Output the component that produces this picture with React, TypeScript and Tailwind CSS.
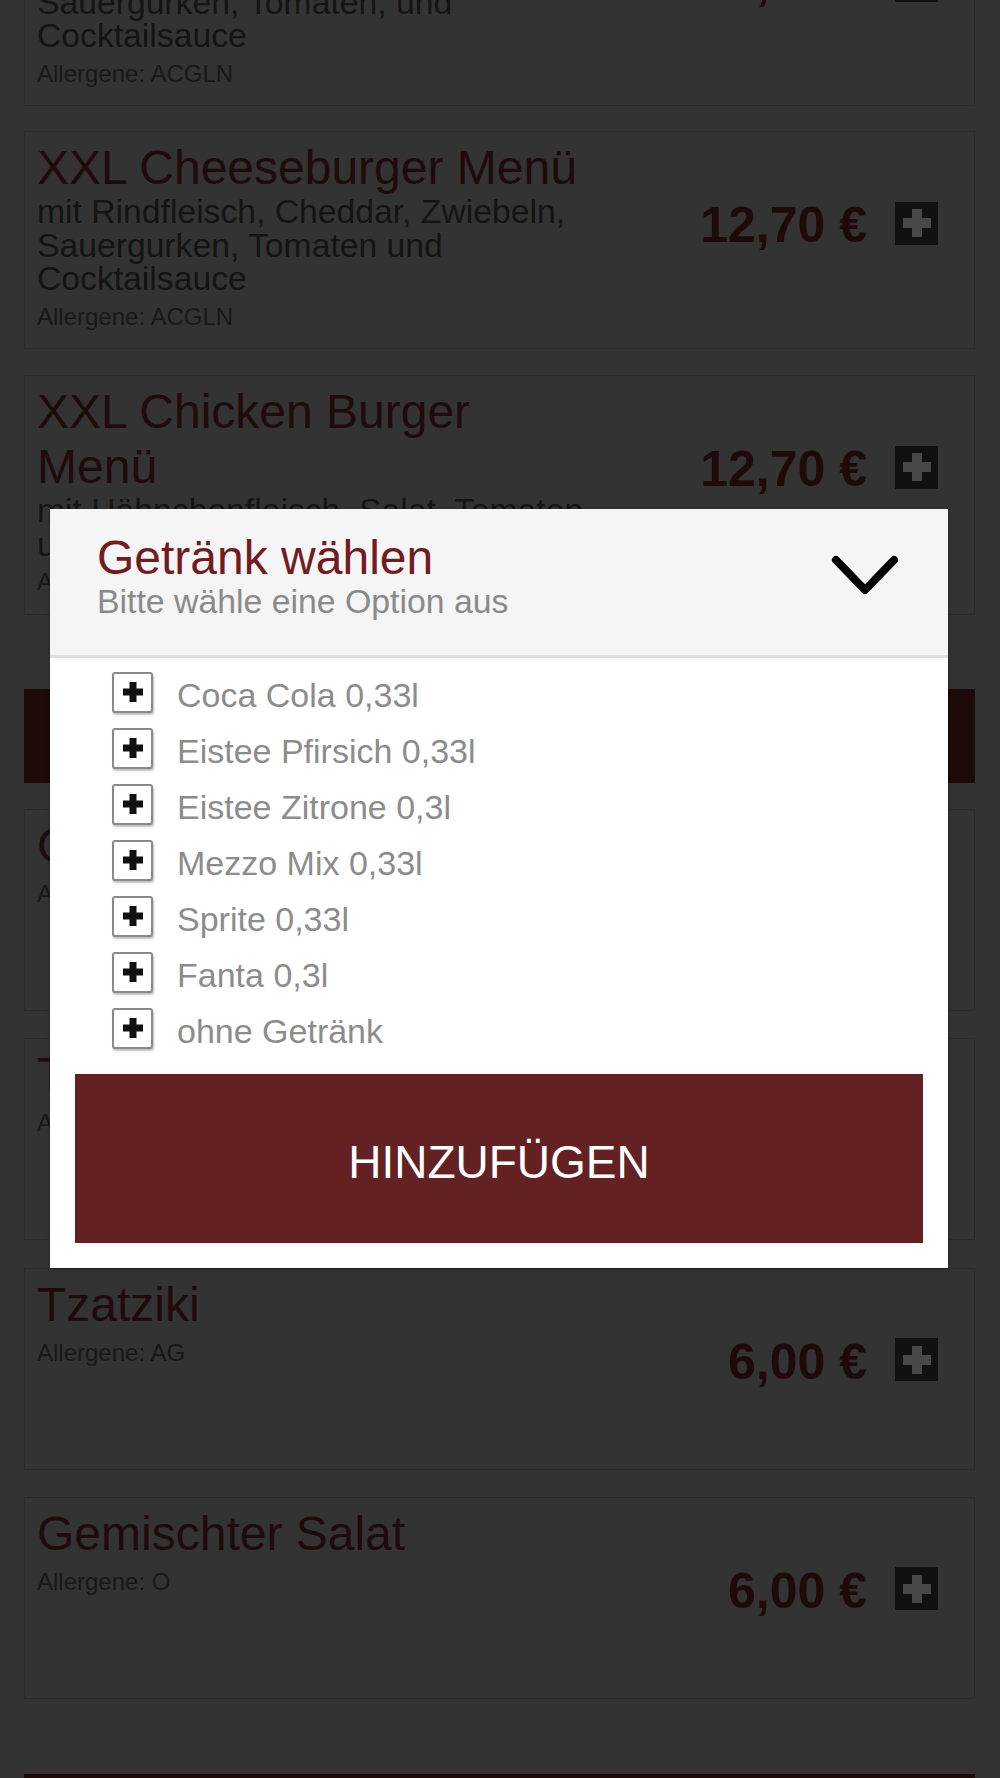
import React from "react";

type Item = {
  title: string;
  desc?: string;
  allergene: string;
  price: string;
};

const topItems: Item[] = [
  {
    title: "XXL Hamburger Menü",
    desc: "mit Rindfleisch, Salat, Zwiebeln, Sauergurken, Tomaten, und Cocktailsauce",
    allergene: "Allergene: ACGLN",
    price: "12,70 €",
  },
  {
    title: "XXL Cheeseburger Menü",
    desc: "mit Rindfleisch, Cheddar, Zwiebeln, Sauergurken, Tomaten und Cocktailsauce",
    allergene: "Allergene: ACGLN",
    price: "12,70 €",
  },
  {
    title: "XXL Chicken Burger Menü",
    desc: "mit Hähnchenfleisch, Salat, Tomaten, und Cocktailsauce",
    allergene: "Allergene: ACGLN",
    price: "12,70 €",
  },
];

const bottomItems: Item[] = [
  { title: "Chicken Nuggets", allergene: "Allergene: A", price: "6,50 €" },
  { title: "Tomatensalat", allergene: "Allergene: A", price: "5,50 €" },
  { title: "Tzatziki", allergene: "Allergene: AG", price: "6,00 €" },
  { title: "Gemischter Salat", allergene: "Allergene: O", price: "6,00 €" },
];

const options = [
  "Coca Cola 0,33l",
  "Eistee Pfirsich 0,33l",
  "Eistee Zitrone 0,3l",
  "Mezzo Mix 0,33l",
  "Sprite 0,33l",
  "Fanta 0,3l",
  "ohne Getränk",
];

function PlusBox() {
  return (
    <div className="w-[43px] h-[43px] bg-[#111111] flex items-center justify-center shrink-0">
      <svg width="28" height="28" viewBox="0 0 28 28">
        <rect x="0" y="9" width="28" height="10" fill="#484848" />
        <rect x="9" y="0" width="10" height="28" fill="#484848" />
      </svg>
    </div>
  );
}

function Card({ item, className }: { item: Item; className?: string }) {
  return (
    <div
      className={
        "min-h-[202px] border border-[#2b2b2b] bg-[#333333] flex justify-between " +
        (className ?? "")
      }
    >
      <div className="w-[578px] pl-[12px] pt-[8px] pb-[18px]">
        <div className="w-[566px] text-[48px] leading-[55px] text-[#1f0b0b]">{item.title}</div>
        {item.desc && (
          <div className="w-[565px] text-[33.7px] leading-[33.5px] text-[#141414]">{item.desc}</div>
        )}
        <div className="mt-[7px] text-[24px] leading-[27.6px] text-[#181818]">{item.allergene}</div>
      </div>
      <div className="pt-[64px] pr-[36px] flex items-start">
        <div className="flex items-center">
          <span className="mt-[4px] text-[50px] leading-[50px] font-bold text-[#1f0a0a] whitespace-nowrap">
            {item.price}
          </span>
          <div className="ml-[28px]">
            <PlusBox />
          </div>
        </div>
      </div>
    </div>
  );
}

function CheckBox() {
  return (
    <div className="w-[41px] h-[41px] border-2 border-[#8a8a8a] rounded-[3px] bg-white shadow-[1px_2px_2px_rgba(0,0,0,0.25)] flex items-center justify-center shrink-0">
      <svg width="20" height="20" viewBox="0 0 20 20">
        <rect x="0" y="6.5" width="20" height="7" fill="#111111" />
        <rect x="6.5" y="0" width="7" height="20" fill="#111111" />
      </svg>
    </div>
  );
}

export default function App() {
  return (
    <div className="relative w-[1000px] h-[1778px] overflow-hidden bg-[#333333] font-['Liberation_Sans',Arial,Helvetica,sans-serif]">
      {/* Page content (dimmed) */}
      <div className="-mt-[112px] pl-[24px] pr-[25px] flex flex-col">
        <Card item={topItems[0]} />
        <Card item={topItems[1]} className="mt-[25px]" />
        <Card item={topItems[2]} className="mt-[26px]" />
        <div className="mt-[74px] h-[94px] bg-[#1c0b09]" />
        <Card item={bottomItems[0]} className="mt-[26px]" />
        <Card item={bottomItems[1]} className="mt-[27px]" />
        <Card item={bottomItems[2]} className="mt-[28px]" />
        <Card item={bottomItems[3]} className="mt-[27px]" />
        <div className="mt-[75px] h-[94px] bg-[#1c0b09]" />
      </div>

      {/* Modal */}
      <div className="absolute left-[50px] top-[509px] w-[898px] bg-white shadow-[0_1px_3px_rgba(0,0,0,0.4)]">
        <div className="bg-[#f5f5f5] border-b-[3px] border-[#dedede] pl-[47px] pr-[49px] pt-[24px] pb-[35px] flex items-center justify-between">
          <div>
            <div className="text-[48px] leading-[49px] text-[#701c22]">Getränk wählen</div>
            <div className="text-[33.8px] leading-[38px] text-[#8a8a8a]">Bitte wähle eine Option aus</div>
          </div>
          <svg width="68" height="44" viewBox="0 0 68 44" className="mt-[-1px]">
            <path
              d="M5 6 L34 36 L63 6"
              fill="none"
              stroke="#000000"
              strokeWidth="8"
              strokeLinecap="round"
              strokeLinejoin="round"
            />
          </svg>
        </div>
        <div className="pt-[6px] pl-[62px]">
          {options.map((o) => (
            <div key={o} className="h-[56px] flex items-center">
              <CheckBox />
              <span className="ml-[24px] pt-[6px] text-[34px] leading-[39px] text-[#8c8c8c]">{o}</span>
            </div>
          ))}
        </div>
        <div className="px-[25px] pt-[18px] pb-[25px]">
          <div className="h-[169px] bg-[#642124] flex items-center justify-center">
            <span className="pt-[7px] text-[46px] text-white">HINZUFÜGEN</span>
          </div>
        </div>
      </div>
    </div>
  );
}
